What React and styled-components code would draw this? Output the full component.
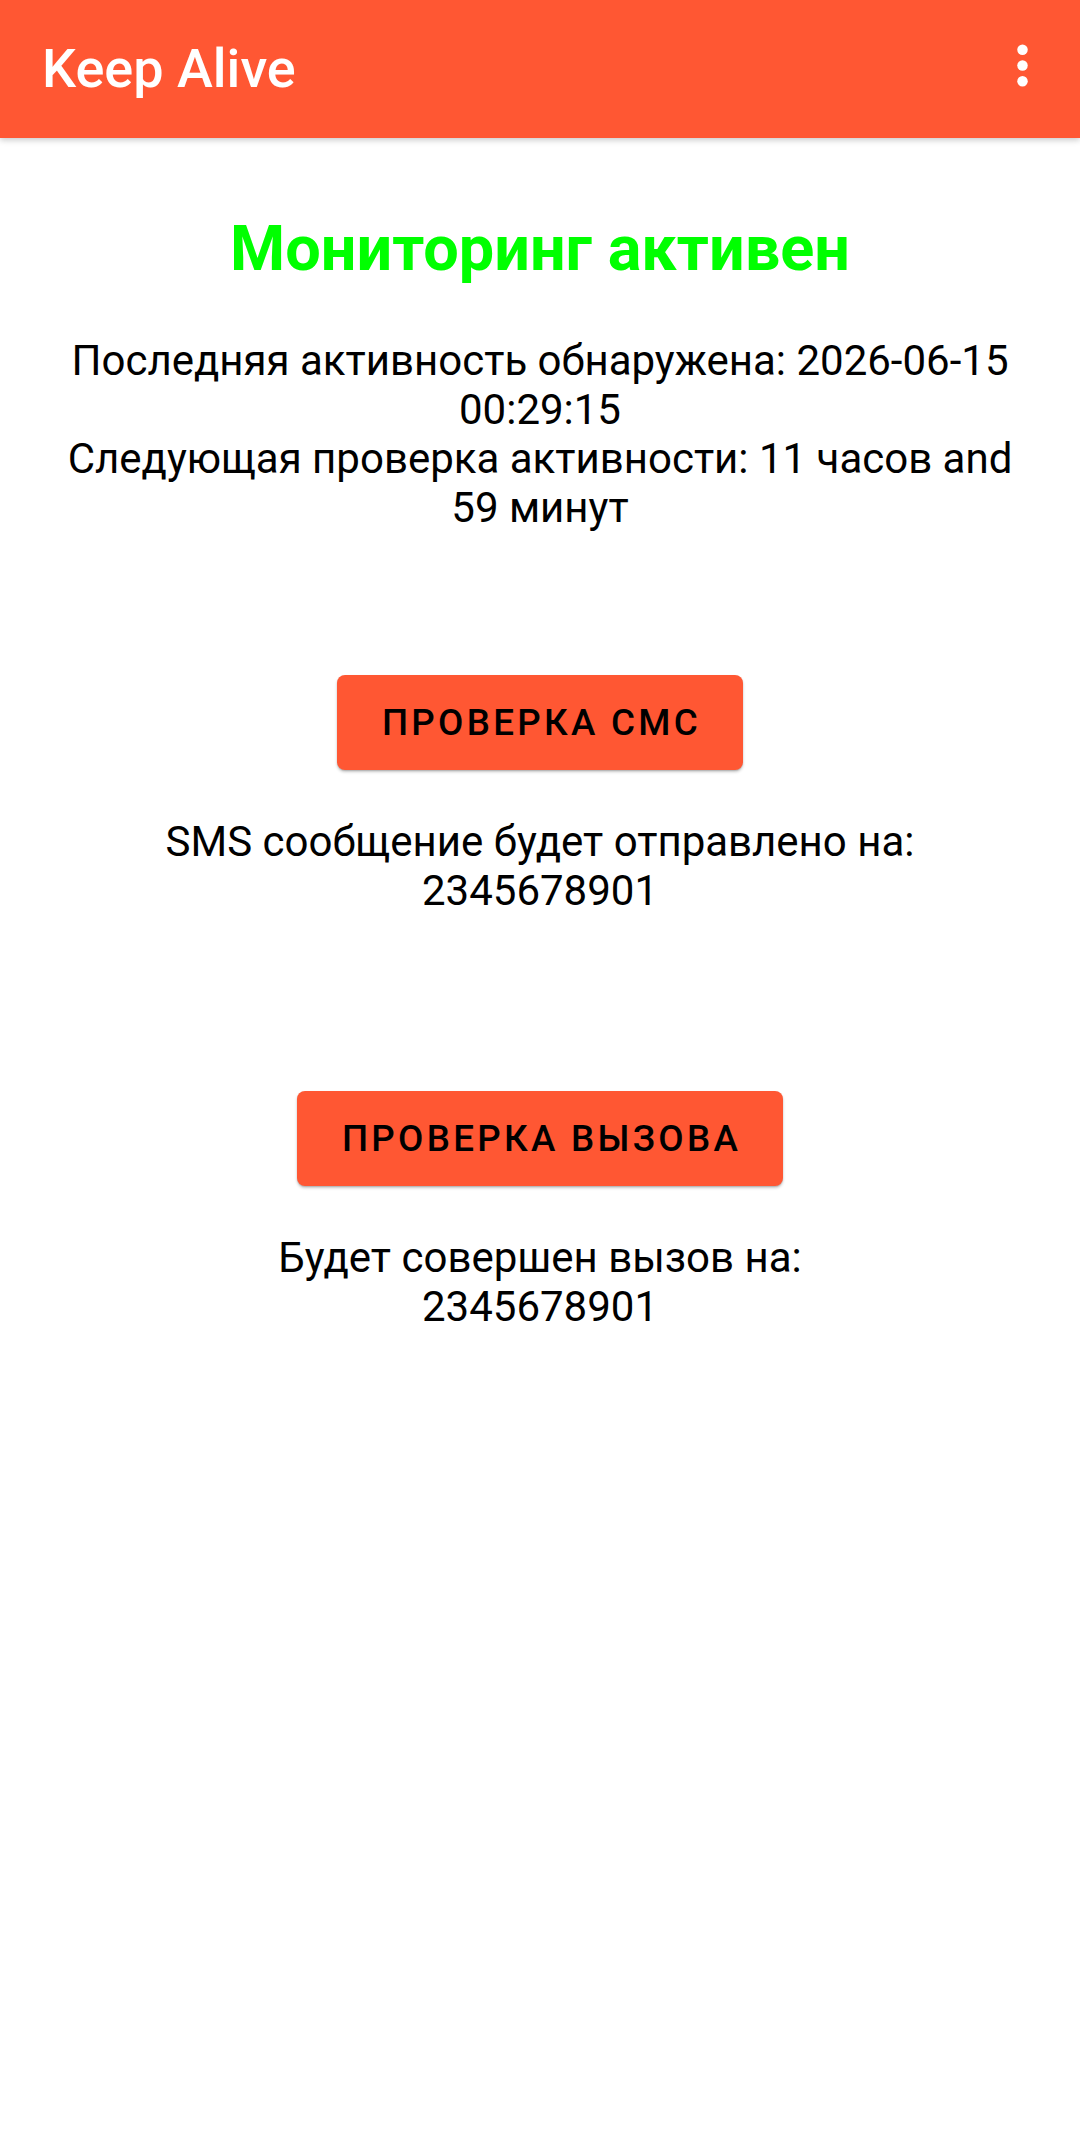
import React from "react";
import styled, { createGlobalStyle } from "styled-components";

const GlobalStyle = createGlobalStyle`
  html, body {
    margin: 0;
    padding: 0;
    background: #ffffff;
    font-family: Roboto, "Noto Sans", "Liberation Sans", sans-serif;
  }
  #root {
    min-height: 2136px;
  }
`;

const Screen = styled.div`
  min-height: 2136px;
  background: #ffffff;
  display: flex;
  flex-direction: column;
`;

const Toolbar = styled.header`
  height: 138px;
  background: #ff5733;
  display: flex;
  align-items: center;
  justify-content: space-between;
  padding: 0 26px 0 42px;
  box-shadow: 0 2px 6px rgba(0, 0, 0, 0.22);
  position: relative;
  z-index: 1;
`;

const AppTitle = styled.h1`
  margin: 0;
  color: #ffffff;
  font-family: Roboto, sans-serif;
  font-weight: 500;
  font-size: 54px;
  line-height: 1.172;
`;

const MenuButton = styled.button`
  width: 63px;
  height: 63px;
  padding: 0;
  margin-bottom: 8px;
  border: none;
  background: transparent;
  display: flex;
  align-items: center;
  justify-content: center;
`;

const Content = styled.main`
  display: flex;
  flex-direction: column;
  align-items: center;
  text-align: center;
  padding: 0 60px;
`;

const Status = styled.h2`
  margin: 74px 0 0;
  color: #00ff00;
  font-family: Roboto, sans-serif;
  font-weight: 700;
  font-size: 63px;
  line-height: 1.172;
`;

const Info = styled.p`
  margin: ${(p) => p.$top}px 0 0;
  color: #000000;
  font-family: Roboto, sans-serif;
  font-size: 42px;
  line-height: 49.2px;
`;

const ActionButton = styled.button`
  margin-top: ${(p) => p.$top}px;
  height: 95px;
  padding: 0 42px 0 45px;
  border: none;
  border-radius: 8px;
  background: #ff5733;
  color: #000000;
  font-family: Roboto, sans-serif;
  font-weight: 500;
  font-size: 36.75px;
  letter-spacing: 3.3px;
  text-transform: uppercase;
  box-shadow: 0 2px 3px rgba(0, 0, 0, 0.22), 0 1px 1px rgba(0, 0, 0, 0.12);
`;

const MoreIcon = () => (
  <svg width="63" height="63" viewBox="0 0 24 24" fill="#ffffff">
    <circle cx="12" cy="6" r="2" />
    <circle cx="12" cy="12" r="2" />
    <circle cx="12" cy="18" r="2" />
  </svg>
);

const App = () => {
  return (
    <Screen>
      <GlobalStyle />
      <Toolbar>
        <AppTitle>Keep Alive</AppTitle>
        <MenuButton aria-label="Меню">
          <MoreIcon />
        </MenuButton>
      </Toolbar>
      <Content>
        <Status>Мониторинг активен</Status>
        <Info $top={50}>
          Последняя активность обнаружена: 2026-06-15 00:29:15
          <br />
          Следующая проверка активности: 11 часов and 59 минут
        </Info>
        <ActionButton $top={142}>Проверка СМС</ActionButton>
        <Info $top={47}>
          SMS сообщение будет отправлено на:
          <br />
          2345678901
        </Info>
        <ActionButton $top={176}>Проверка вызова</ActionButton>
        <Info $top={47}>
          Будет совершен вызов на:
          <br />
          2345678901
        </Info>
      </Content>
    </Screen>
  );
};

export default App;
